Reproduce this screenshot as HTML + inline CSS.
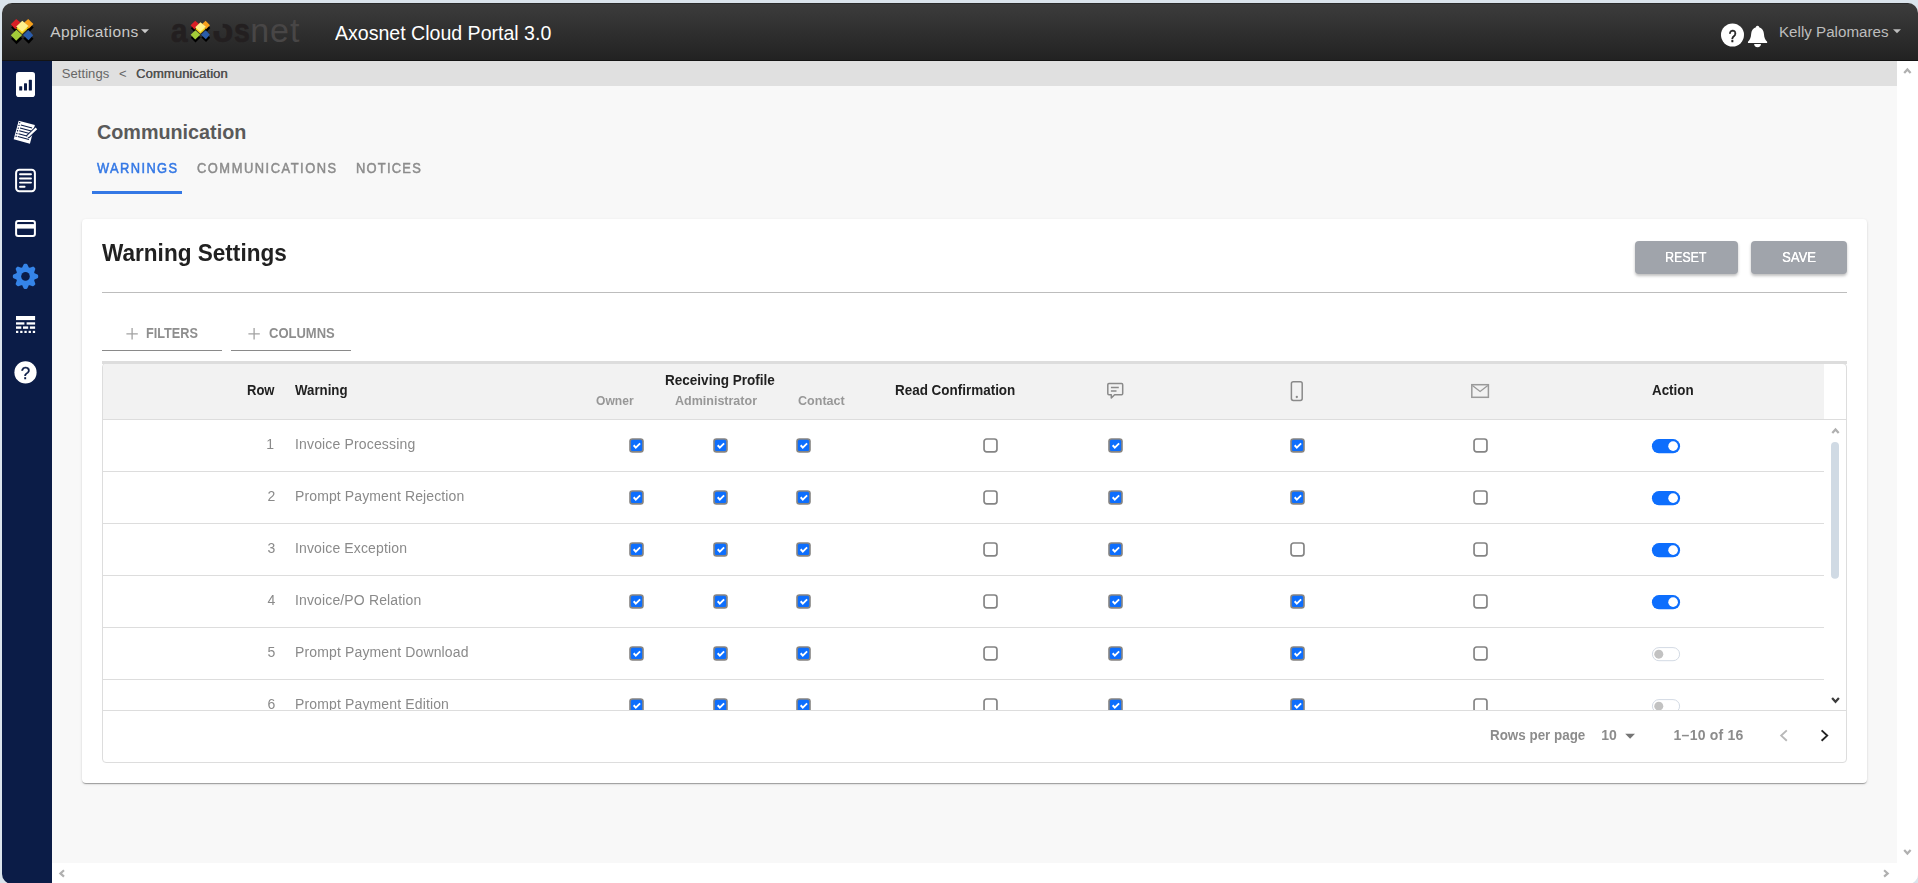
<!DOCTYPE html>
<html lang="en"><head><meta charset="utf-8"><title>Axosnet Cloud Portal 3.0</title>
<style>
html,body{margin:0;padding:0}
body{width:1918px;height:883px;overflow:hidden;background:#dbe4ec;font-family:"Liberation Sans",sans-serif;position:relative}
.t{position:absolute;white-space:nowrap;display:block}
.abs{position:absolute}
#win{position:absolute;left:2px;top:3px;width:1916px;height:881px;border-radius:10px;overflow:hidden;background:#f8f8f8}
#nav{position:absolute;left:0;top:0;width:1916px;height:58px;box-sizing:border-box;border-top:1px solid #2c2c2c;border-bottom:1px solid #141414;background:linear-gradient(#3c3c3c,#222)}
#side{position:absolute;left:0;top:58px;width:50px;height:824px;background:#0b1c47}
#crumb{position:absolute;left:50px;top:58px;width:1845px;height:25px;background:#e0e0e0}
#vs{position:absolute;left:1895px;top:58px;width:21px;height:802px;background:#fff}
#hs{position:absolute;left:50px;top:860px;width:1866px;height:22px;background:#fff}
#card{position:absolute;left:80px;top:216px;width:1785px;height:564px;background:#fff;border-radius:4px;box-shadow:0 2px 1px -1px rgba(0,0,0,.2),0 1px 1px 0 rgba(0,0,0,.14),0 1px 3px 0 rgba(0,0,0,.12)}
.btn{position:absolute;top:238px;height:33px;background:#a0a4ab;border-radius:4px;box-shadow:0 2px 3px rgba(0,0,0,.25)}
.hr{position:absolute;height:1px;background:#bdbdbd}
#tbl{position:absolute;left:100px;top:360px;width:1743px;height:398px;border:1px solid #ddd;border-radius:4px;overflow:hidden}
#tbar{position:absolute;left:100px;top:358px;width:1745px;height:3px;background:#ddd}
#thead{position:absolute;left:0;top:0;width:1721px;height:55px;background:#f2f2f2}
.rl{position:absolute;left:0;width:1721px;height:1px;background:#ddd}
</style></head><body>
<div id="win">
<div id="nav"></div><div id="side"></div><div id="crumb"></div><div id="vs"></div><div id="hs"></div><div id="card"></div>
<div class="btn" style="left:1633px;width:103px"></div><div class="btn" style="left:1749px;width:96px"></div>
<div class="hr" style="left:100px;top:289px;width:1745px"></div>
<div class="hr" style="left:100px;top:347px;width:120px;background:#8a8a8a"></div>
<div class="hr" style="left:229px;top:347px;width:120px;background:#8a8a8a"></div>
<div class="abs" style="left:90px;top:188px;width:90px;height:3px;background:#3478e5"></div>
<div id="tbar"></div><div id="tbl"><div id="thead"></div>
<div class="rl" style="top:55px;width:1746px"></div>
<div class="rl" style="top:107px"></div>
<div class="rl" style="top:159px"></div>
<div class="rl" style="top:211px"></div>
<div class="rl" style="top:263px"></div>
<div class="rl" style="top:315px"></div>
<div class="rl" style="top:346px;width:1746px"></div>
</div>
<svg class="abs" style="left:-2px;top:-3px" width="1918" height="710" viewBox="0 0 1918 710">
<g transform="translate(629.2,438.15)"><rect x="0" y="0" width="14.6" height="14.6" rx="3.3" fill="#868482"/><rect x="1.65" y="1.65" width="11.3" height="11.3" rx="1.7" fill="#0d6efd"/><path d="M4.5 7.1L6.6 9.5L10.9 5.2" fill="none" stroke="#fff" stroke-width="1.9"/></g>
<g transform="translate(713.2,438.15)"><rect x="0" y="0" width="14.6" height="14.6" rx="3.3" fill="#868482"/><rect x="1.65" y="1.65" width="11.3" height="11.3" rx="1.7" fill="#0d6efd"/><path d="M4.5 7.1L6.6 9.5L10.9 5.2" fill="none" stroke="#fff" stroke-width="1.9"/></g>
<g transform="translate(796.2,438.15)"><rect x="0" y="0" width="14.6" height="14.6" rx="3.3" fill="#868482"/><rect x="1.65" y="1.65" width="11.3" height="11.3" rx="1.7" fill="#0d6efd"/><path d="M4.5 7.1L6.6 9.5L10.9 5.2" fill="none" stroke="#fff" stroke-width="1.9"/></g>
<g transform="translate(983.2,438.15)"><rect x=".85" y=".85" width="12.9" height="12.9" rx="2.6" fill="#fff" stroke="#848484" stroke-width="1.7"/></g>
<g transform="translate(1108.2,438.15)"><rect x="0" y="0" width="14.6" height="14.6" rx="3.3" fill="#868482"/><rect x="1.65" y="1.65" width="11.3" height="11.3" rx="1.7" fill="#0d6efd"/><path d="M4.5 7.1L6.6 9.5L10.9 5.2" fill="none" stroke="#fff" stroke-width="1.9"/></g>
<g transform="translate(1290.2,438.15)"><rect x="0" y="0" width="14.6" height="14.6" rx="3.3" fill="#868482"/><rect x="1.65" y="1.65" width="11.3" height="11.3" rx="1.7" fill="#0d6efd"/><path d="M4.5 7.1L6.6 9.5L10.9 5.2" fill="none" stroke="#fff" stroke-width="1.9"/></g>
<g transform="translate(1473.2,438.15)"><rect x=".85" y=".85" width="12.9" height="12.9" rx="2.6" fill="#fff" stroke="#848484" stroke-width="1.7"/></g>
<g transform="translate(1651.9,439.1)"><rect x="0" y="0" width="28.2" height="14.1" rx="7.05" fill="#0d6efd"/><circle cx="21.2" cy="7.05" r="4.8" fill="#fff"/></g>
<g transform="translate(629.2,490.15)"><rect x="0" y="0" width="14.6" height="14.6" rx="3.3" fill="#868482"/><rect x="1.65" y="1.65" width="11.3" height="11.3" rx="1.7" fill="#0d6efd"/><path d="M4.5 7.1L6.6 9.5L10.9 5.2" fill="none" stroke="#fff" stroke-width="1.9"/></g>
<g transform="translate(713.2,490.15)"><rect x="0" y="0" width="14.6" height="14.6" rx="3.3" fill="#868482"/><rect x="1.65" y="1.65" width="11.3" height="11.3" rx="1.7" fill="#0d6efd"/><path d="M4.5 7.1L6.6 9.5L10.9 5.2" fill="none" stroke="#fff" stroke-width="1.9"/></g>
<g transform="translate(796.2,490.15)"><rect x="0" y="0" width="14.6" height="14.6" rx="3.3" fill="#868482"/><rect x="1.65" y="1.65" width="11.3" height="11.3" rx="1.7" fill="#0d6efd"/><path d="M4.5 7.1L6.6 9.5L10.9 5.2" fill="none" stroke="#fff" stroke-width="1.9"/></g>
<g transform="translate(983.2,490.15)"><rect x=".85" y=".85" width="12.9" height="12.9" rx="2.6" fill="#fff" stroke="#848484" stroke-width="1.7"/></g>
<g transform="translate(1108.2,490.15)"><rect x="0" y="0" width="14.6" height="14.6" rx="3.3" fill="#868482"/><rect x="1.65" y="1.65" width="11.3" height="11.3" rx="1.7" fill="#0d6efd"/><path d="M4.5 7.1L6.6 9.5L10.9 5.2" fill="none" stroke="#fff" stroke-width="1.9"/></g>
<g transform="translate(1290.2,490.15)"><rect x="0" y="0" width="14.6" height="14.6" rx="3.3" fill="#868482"/><rect x="1.65" y="1.65" width="11.3" height="11.3" rx="1.7" fill="#0d6efd"/><path d="M4.5 7.1L6.6 9.5L10.9 5.2" fill="none" stroke="#fff" stroke-width="1.9"/></g>
<g transform="translate(1473.2,490.15)"><rect x=".85" y=".85" width="12.9" height="12.9" rx="2.6" fill="#fff" stroke="#848484" stroke-width="1.7"/></g>
<g transform="translate(1651.9,491.1)"><rect x="0" y="0" width="28.2" height="14.1" rx="7.05" fill="#0d6efd"/><circle cx="21.2" cy="7.05" r="4.8" fill="#fff"/></g>
<g transform="translate(629.2,542.15)"><rect x="0" y="0" width="14.6" height="14.6" rx="3.3" fill="#868482"/><rect x="1.65" y="1.65" width="11.3" height="11.3" rx="1.7" fill="#0d6efd"/><path d="M4.5 7.1L6.6 9.5L10.9 5.2" fill="none" stroke="#fff" stroke-width="1.9"/></g>
<g transform="translate(713.2,542.15)"><rect x="0" y="0" width="14.6" height="14.6" rx="3.3" fill="#868482"/><rect x="1.65" y="1.65" width="11.3" height="11.3" rx="1.7" fill="#0d6efd"/><path d="M4.5 7.1L6.6 9.5L10.9 5.2" fill="none" stroke="#fff" stroke-width="1.9"/></g>
<g transform="translate(796.2,542.15)"><rect x="0" y="0" width="14.6" height="14.6" rx="3.3" fill="#868482"/><rect x="1.65" y="1.65" width="11.3" height="11.3" rx="1.7" fill="#0d6efd"/><path d="M4.5 7.1L6.6 9.5L10.9 5.2" fill="none" stroke="#fff" stroke-width="1.9"/></g>
<g transform="translate(983.2,542.15)"><rect x=".85" y=".85" width="12.9" height="12.9" rx="2.6" fill="#fff" stroke="#848484" stroke-width="1.7"/></g>
<g transform="translate(1108.2,542.15)"><rect x="0" y="0" width="14.6" height="14.6" rx="3.3" fill="#868482"/><rect x="1.65" y="1.65" width="11.3" height="11.3" rx="1.7" fill="#0d6efd"/><path d="M4.5 7.1L6.6 9.5L10.9 5.2" fill="none" stroke="#fff" stroke-width="1.9"/></g>
<g transform="translate(1290.2,542.15)"><rect x=".85" y=".85" width="12.9" height="12.9" rx="2.6" fill="#fff" stroke="#848484" stroke-width="1.7"/></g>
<g transform="translate(1473.2,542.15)"><rect x=".85" y=".85" width="12.9" height="12.9" rx="2.6" fill="#fff" stroke="#848484" stroke-width="1.7"/></g>
<g transform="translate(1651.9,543.1)"><rect x="0" y="0" width="28.2" height="14.1" rx="7.05" fill="#0d6efd"/><circle cx="21.2" cy="7.05" r="4.8" fill="#fff"/></g>
<g transform="translate(629.2,594.15)"><rect x="0" y="0" width="14.6" height="14.6" rx="3.3" fill="#868482"/><rect x="1.65" y="1.65" width="11.3" height="11.3" rx="1.7" fill="#0d6efd"/><path d="M4.5 7.1L6.6 9.5L10.9 5.2" fill="none" stroke="#fff" stroke-width="1.9"/></g>
<g transform="translate(713.2,594.15)"><rect x="0" y="0" width="14.6" height="14.6" rx="3.3" fill="#868482"/><rect x="1.65" y="1.65" width="11.3" height="11.3" rx="1.7" fill="#0d6efd"/><path d="M4.5 7.1L6.6 9.5L10.9 5.2" fill="none" stroke="#fff" stroke-width="1.9"/></g>
<g transform="translate(796.2,594.15)"><rect x="0" y="0" width="14.6" height="14.6" rx="3.3" fill="#868482"/><rect x="1.65" y="1.65" width="11.3" height="11.3" rx="1.7" fill="#0d6efd"/><path d="M4.5 7.1L6.6 9.5L10.9 5.2" fill="none" stroke="#fff" stroke-width="1.9"/></g>
<g transform="translate(983.2,594.15)"><rect x=".85" y=".85" width="12.9" height="12.9" rx="2.6" fill="#fff" stroke="#848484" stroke-width="1.7"/></g>
<g transform="translate(1108.2,594.15)"><rect x="0" y="0" width="14.6" height="14.6" rx="3.3" fill="#868482"/><rect x="1.65" y="1.65" width="11.3" height="11.3" rx="1.7" fill="#0d6efd"/><path d="M4.5 7.1L6.6 9.5L10.9 5.2" fill="none" stroke="#fff" stroke-width="1.9"/></g>
<g transform="translate(1290.2,594.15)"><rect x="0" y="0" width="14.6" height="14.6" rx="3.3" fill="#868482"/><rect x="1.65" y="1.65" width="11.3" height="11.3" rx="1.7" fill="#0d6efd"/><path d="M4.5 7.1L6.6 9.5L10.9 5.2" fill="none" stroke="#fff" stroke-width="1.9"/></g>
<g transform="translate(1473.2,594.15)"><rect x=".85" y=".85" width="12.9" height="12.9" rx="2.6" fill="#fff" stroke="#848484" stroke-width="1.7"/></g>
<g transform="translate(1651.9,595.1)"><rect x="0" y="0" width="28.2" height="14.1" rx="7.05" fill="#0d6efd"/><circle cx="21.2" cy="7.05" r="4.8" fill="#fff"/></g>
<g transform="translate(629.2,646.15)"><rect x="0" y="0" width="14.6" height="14.6" rx="3.3" fill="#868482"/><rect x="1.65" y="1.65" width="11.3" height="11.3" rx="1.7" fill="#0d6efd"/><path d="M4.5 7.1L6.6 9.5L10.9 5.2" fill="none" stroke="#fff" stroke-width="1.9"/></g>
<g transform="translate(713.2,646.15)"><rect x="0" y="0" width="14.6" height="14.6" rx="3.3" fill="#868482"/><rect x="1.65" y="1.65" width="11.3" height="11.3" rx="1.7" fill="#0d6efd"/><path d="M4.5 7.1L6.6 9.5L10.9 5.2" fill="none" stroke="#fff" stroke-width="1.9"/></g>
<g transform="translate(796.2,646.15)"><rect x="0" y="0" width="14.6" height="14.6" rx="3.3" fill="#868482"/><rect x="1.65" y="1.65" width="11.3" height="11.3" rx="1.7" fill="#0d6efd"/><path d="M4.5 7.1L6.6 9.5L10.9 5.2" fill="none" stroke="#fff" stroke-width="1.9"/></g>
<g transform="translate(983.2,646.15)"><rect x=".85" y=".85" width="12.9" height="12.9" rx="2.6" fill="#fff" stroke="#848484" stroke-width="1.7"/></g>
<g transform="translate(1108.2,646.15)"><rect x="0" y="0" width="14.6" height="14.6" rx="3.3" fill="#868482"/><rect x="1.65" y="1.65" width="11.3" height="11.3" rx="1.7" fill="#0d6efd"/><path d="M4.5 7.1L6.6 9.5L10.9 5.2" fill="none" stroke="#fff" stroke-width="1.9"/></g>
<g transform="translate(1290.2,646.15)"><rect x="0" y="0" width="14.6" height="14.6" rx="3.3" fill="#868482"/><rect x="1.65" y="1.65" width="11.3" height="11.3" rx="1.7" fill="#0d6efd"/><path d="M4.5 7.1L6.6 9.5L10.9 5.2" fill="none" stroke="#fff" stroke-width="1.9"/></g>
<g transform="translate(1473.2,646.15)"><rect x=".85" y=".85" width="12.9" height="12.9" rx="2.6" fill="#fff" stroke="#848484" stroke-width="1.7"/></g>
<g transform="translate(1651.9,647.1)"><rect x=".5" y=".5" width="27.2" height="13.1" rx="6.55" fill="#fff" stroke="#d3dae4" stroke-width="1"/><circle cx="6.9" cy="7.05" r="4.5" fill="#c2c2c2"/></g>
<g transform="translate(629.2,698.15)"><rect x="0" y="0" width="14.6" height="14.6" rx="3.3" fill="#868482"/><rect x="1.65" y="1.65" width="11.3" height="11.3" rx="1.7" fill="#0d6efd"/><path d="M4.5 7.1L6.6 9.5L10.9 5.2" fill="none" stroke="#fff" stroke-width="1.9"/></g>
<g transform="translate(713.2,698.15)"><rect x="0" y="0" width="14.6" height="14.6" rx="3.3" fill="#868482"/><rect x="1.65" y="1.65" width="11.3" height="11.3" rx="1.7" fill="#0d6efd"/><path d="M4.5 7.1L6.6 9.5L10.9 5.2" fill="none" stroke="#fff" stroke-width="1.9"/></g>
<g transform="translate(796.2,698.15)"><rect x="0" y="0" width="14.6" height="14.6" rx="3.3" fill="#868482"/><rect x="1.65" y="1.65" width="11.3" height="11.3" rx="1.7" fill="#0d6efd"/><path d="M4.5 7.1L6.6 9.5L10.9 5.2" fill="none" stroke="#fff" stroke-width="1.9"/></g>
<g transform="translate(983.2,698.15)"><rect x=".85" y=".85" width="12.9" height="12.9" rx="2.6" fill="#fff" stroke="#848484" stroke-width="1.7"/></g>
<g transform="translate(1108.2,698.15)"><rect x="0" y="0" width="14.6" height="14.6" rx="3.3" fill="#868482"/><rect x="1.65" y="1.65" width="11.3" height="11.3" rx="1.7" fill="#0d6efd"/><path d="M4.5 7.1L6.6 9.5L10.9 5.2" fill="none" stroke="#fff" stroke-width="1.9"/></g>
<g transform="translate(1290.2,698.15)"><rect x="0" y="0" width="14.6" height="14.6" rx="3.3" fill="#868482"/><rect x="1.65" y="1.65" width="11.3" height="11.3" rx="1.7" fill="#0d6efd"/><path d="M4.5 7.1L6.6 9.5L10.9 5.2" fill="none" stroke="#fff" stroke-width="1.9"/></g>
<g transform="translate(1473.2,698.15)"><rect x=".85" y=".85" width="12.9" height="12.9" rx="2.6" fill="#fff" stroke="#848484" stroke-width="1.7"/></g>
<g transform="translate(1651.9,699.1)"><rect x=".5" y=".5" width="27.2" height="13.1" rx="6.55" fill="#fff" stroke="#d3dae4" stroke-width="1"/><circle cx="6.9" cy="7.05" r="4.5" fill="#c2c2c2"/></g>
</svg>
<span class="t" id="t_app" style="left:48.2px;top:20.9px;font-size:15.5px;line-height:15.5px;color:#c9c9c9;letter-spacing:0.402px;">Applications</span>
<span class="t" id="t_lga" style="left:168.6px;top:10.2px;font-size:34px;line-height:34px;color:#231f20;font-weight:700;transform:scaleX(0.8746);transform-origin:0 0;-webkit-text-stroke:.7px #231f20;">a</span>
<span class="t" id="t_lgo" style="left:210.4px;top:10.2px;font-size:34px;line-height:34px;color:#231f20;font-weight:700;transform:scaleX(1.0);transform-origin:0 0;-webkit-text-stroke:.7px #231f20;clip-path:polygon(10.3px 0,100% 0,100% 100%,0 100%,0 17.9px,10.3px 17.9px);">o</span>
<span class="t" id="t_lgs" style="left:231.6px;top:10.2px;font-size:34px;line-height:34px;color:#231f20;font-weight:700;transform:scaleX(0.84);transform-origin:0 0;-webkit-text-stroke:.7px #231f20;">s</span>
<span class="t" id="t_lgnet" style="left:248.2px;top:10.2px;font-size:34px;line-height:34px;color:#484646;letter-spacing:1.017px;">net</span>
<span class="t" id="t_title" style="left:332.5px;top:20.1px;font-size:20px;line-height:20px;color:#fff;transform:scaleX(0.9776);transform-origin:0 0;">Axosnet Cloud Portal 3.0</span>
<span class="t" id="t_user" style="left:1777.4px;top:20.9px;font-size:15.5px;line-height:15.5px;color:#bdbdbd;transform:scaleX(0.9777);transform-origin:0 0;">Kelly Palomares</span>
<span class="t" id="t_bc1" style="left:59.8px;top:64.0px;font-size:13px;line-height:13px;color:#666;letter-spacing:0.059px;">Settings</span>
<span class="t" id="t_bc2" style="left:117.0px;top:64.0px;font-size:13px;line-height:13px;color:#666;">&lt;</span>
<span class="t" id="t_bc3" style="left:134.0px;top:64.0px;font-size:13px;line-height:13px;color:#505050;letter-spacing:0.106px;text-shadow:0.35px 0 0 #505050;">Communication</span>
<span class="t" id="t_h1" style="left:94.6px;top:119.1px;font-size:20px;line-height:20px;color:#5a5a5a;font-weight:700;transform:scaleX(0.9879);transform-origin:0 0;">Communication</span>
<div class="abs" style="left:0;top:0;width:1915px;height:881px;will-change:transform">
<span class="t" id="t_tab1" style="left:95.0px;top:158.1px;font-size:14px;line-height:14px;color:#3478e5;transform:scaleX(0.92);transform-origin:0 0;letter-spacing:1.512px;-webkit-text-stroke:.5px #3478e5;">WARNINGS</span>
<span class="t" id="t_tab2" style="left:195.2px;top:158.1px;font-size:14px;line-height:14px;color:#8c8c8c;transform:scaleX(0.92);transform-origin:0 0;letter-spacing:1.659px;-webkit-text-stroke:.5px #8c8c8c;">COMMUNICATIONS</span>
<span class="t" id="t_tab3" style="left:354.2px;top:158.1px;font-size:14px;line-height:14px;color:#8c8c8c;transform:scaleX(0.92);transform-origin:0 0;letter-spacing:1.367px;-webkit-text-stroke:.5px #8c8c8c;">NOTICES</span>
<span class="t" id="t_ws" style="left:100.2px;top:237.7px;font-size:24px;line-height:24px;color:#212121;font-weight:700;transform:scaleX(0.9407);transform-origin:0 0;">Warning Settings</span>
<span class="t" id="t_reset" style="left:1663.2px;top:247.1px;font-size:14px;line-height:14px;color:#fff;transform:scaleX(0.8846);transform-origin:0 0;text-shadow:0.3px 0 0 #fff;">RESET</span>
<span class="t" id="t_save" style="left:1780.4px;top:247.1px;font-size:14px;line-height:14px;color:#fff;transform:scaleX(0.9308);transform-origin:0 0;text-shadow:0.3px 0 0 #fff;">SAVE</span>
<span class="t" id="t_fil" style="left:144.4px;top:323.1px;font-size:14px;line-height:14px;color:#8e8e8e;font-weight:700;transform:scaleX(0.9076);transform-origin:0 0;">FILTERS</span>
<span class="t" id="t_col" style="left:266.7px;top:323.1px;font-size:14px;line-height:14px;color:#8e8e8e;font-weight:700;transform:scaleX(0.9296);transform-origin:0 0;">COLUMNS</span>
<span class="t" id="t_row" style="left:245.2px;top:380.1px;font-size:14px;line-height:14px;color:#212121;font-weight:700;transform:scaleX(0.9302);transform-origin:0 0;">Row</span>
<span class="t" id="t_warn" style="left:293.0px;top:380.1px;font-size:14px;line-height:14px;color:#212121;font-weight:700;transform:scaleX(0.9462);transform-origin:0 0;">Warning</span>
<span class="t" id="t_rp" style="left:663.4px;top:370.1px;font-size:14px;line-height:14px;color:#212121;font-weight:700;transform:scaleX(0.9666);transform-origin:0 0;">Receiving Profile</span>
<span class="t" id="t_own" style="left:593.7px;top:391.0px;font-size:13px;line-height:13px;color:#979797;font-weight:700;transform:scaleX(0.9291);transform-origin:0 0;">Owner</span>
<span class="t" id="t_adm" style="left:673.0px;top:391.0px;font-size:13px;line-height:13px;color:#979797;font-weight:700;transform:scaleX(0.9621);transform-origin:0 0;">Administrator</span>
<span class="t" id="t_con" style="left:796.3px;top:391.0px;font-size:13px;line-height:13px;color:#979797;font-weight:700;transform:scaleX(0.9651);transform-origin:0 0;">Contact</span>
<span class="t" id="t_rc" style="left:893.0px;top:380.1px;font-size:14px;line-height:14px;color:#212121;font-weight:700;transform:scaleX(0.9606);transform-origin:0 0;">Read Confirmation</span>
<span class="t" id="t_act" style="left:1650.0px;top:380.1px;font-size:14px;line-height:14px;color:#212121;font-weight:700;transform:scaleX(0.9549);transform-origin:0 0;">Action</span>
<span class="t" id="t_rpp" style="left:1488.1px;top:725.1px;font-size:14px;line-height:14px;color:#8c8c8c;font-weight:700;transform:scaleX(0.9569);transform-origin:0 0;">Rows per page</span>
<span class="t" id="t_10" style="left:1599.2px;top:725.1px;font-size:14px;line-height:14px;color:#8c8c8c;font-weight:700;letter-spacing:0.022px;">10</span>
<span class="t" id="t_rng" style="left:1671.6px;top:725.1px;font-size:14px;line-height:14px;color:#8c8c8c;font-weight:700;letter-spacing:0.231px;">1–10 of 16</span>
</div>
<div class="abs" style="left:0;top:0;width:1916px;height:707px;overflow:hidden;will-change:transform">
<span class="t" id="t_r0" style="left:293.0px;top:434.1px;font-size:14px;line-height:14px;color:#8a8a8a;letter-spacing:0.158px;">Invoice Processing</span>
<span class="t" id="t_n0" style="left:264.3px;top:434.1px;font-size:14px;line-height:14px;color:#8a8a8a;">1</span>
<span class="t" id="t_r1" style="left:293.0px;top:486.1px;font-size:14px;line-height:14px;color:#8a8a8a;letter-spacing:0.120px;">Prompt Payment Rejection</span>
<span class="t" id="t_n1" style="left:265.6px;top:486.1px;font-size:14px;line-height:14px;color:#8a8a8a;">2</span>
<span class="t" id="t_r2" style="left:293.0px;top:538.1px;font-size:14px;line-height:14px;color:#8a8a8a;letter-spacing:0.139px;">Invoice Exception</span>
<span class="t" id="t_n2" style="left:265.6px;top:538.1px;font-size:14px;line-height:14px;color:#8a8a8a;">3</span>
<span class="t" id="t_r3" style="left:293.0px;top:590.1px;font-size:14px;line-height:14px;color:#8a8a8a;letter-spacing:0.139px;">Invoice/PO Relation</span>
<span class="t" id="t_n3" style="left:265.6px;top:590.1px;font-size:14px;line-height:14px;color:#8a8a8a;">4</span>
<span class="t" id="t_r4" style="left:293.0px;top:642.1px;font-size:14px;line-height:14px;color:#8a8a8a;letter-spacing:0.139px;">Prompt Payment Download</span>
<span class="t" id="t_n4" style="left:265.6px;top:642.1px;font-size:14px;line-height:14px;color:#8a8a8a;">5</span>
<span class="t" id="t_r5" style="left:293.0px;top:694.1px;font-size:14px;line-height:14px;color:#8a8a8a;letter-spacing:0.139px;">Prompt Payment Edition</span>
<span class="t" id="t_n5" style="left:265.6px;top:694.1px;font-size:14px;line-height:14px;color:#8a8a8a;">6</span>
</div>
<svg class="abs" style="left:-2px;top:-3px;overflow:visible" width="1918" height="883" viewBox="0 0 1918 883">
<g><polygon points="11.1,27.6 16.5,22.4 20.9,26.0 15.6,32.6" fill="#000" /><polygon points="24.5,26.0 28.5,22.4 33.7,27.4 29.0,32.2" fill="#000" /><polygon points="11.1,38.7 16.7,33.2 22.4,38.5 16.5,44.2" fill="#000" /><polygon points="23.3,38.5 28.8,33.4 33.5,38.7 28.8,43.7" fill="#000" /><polygon points="10.8,24.2 16.2,19.0 20.6,22.6 15.3,29.2" fill="#d81f26" /><polygon points="24.2,22.6 28.2,19.0 33.4,24.0 28.7,28.8" fill="#f6a01c" /><polygon points="10.8,35.3 16.4,29.8 22.1,35.1 16.2,40.8" fill="#a3cd39" /><polygon points="23.0,35.1 28.5,30.0 33.2,35.3 28.5,40.3" fill="#2a5caa" /><polygon points="16.2,28.6 22.3,22.9 28.5,28.1 22.1,34.0" fill="#f7d417" /><polygon points="16.2,26.4 22.3,20.7 28.5,25.9 22.1,31.8" fill="#fdf08c" /></g>
<g transform="translate(181.3,4.5) scale(0.86)"><polygon points="11.1,27.6 16.5,22.4 20.9,26.0 15.6,32.6" fill="#000" /><polygon points="24.5,26.0 28.5,22.4 33.7,27.4 29.0,32.2" fill="#000" /><polygon points="11.1,38.7 16.7,33.2 22.4,38.5 16.5,44.2" fill="#000" /><polygon points="23.3,38.5 28.8,33.4 33.5,38.7 28.8,43.7" fill="#000" /><polygon points="10.8,24.2 16.2,19.0 20.6,22.6 15.3,29.2" fill="#d81f26" /><polygon points="24.2,22.6 28.2,19.0 33.4,24.0 28.7,28.8" fill="#f6a01c" /><polygon points="10.8,35.3 16.4,29.8 22.1,35.1 16.2,40.8" fill="#a3cd39" /><polygon points="23.0,35.1 28.5,30.0 33.2,35.3 28.5,40.3" fill="#2a5caa" /><polygon points="16.2,28.6 22.3,22.9 28.5,28.1 22.1,34.0" fill="#f7d417" /><polygon points="16.2,26.4 22.3,20.7 28.5,25.9 22.1,31.8" fill="#fdf08c" /></g>
<polygon points="141,29.3 149,29.3 145,33.3" fill="#c9c9c9"/>
<polygon points="1893,29.3 1901,29.3 1897,33.3" fill="#bdbdbd"/>
<circle cx="1732.5" cy="35" r="11.5" fill="#fff"/>
<text transform="translate(1732.6,41.6) scale(.82,1)" x="0" y="0" font-family="Liberation Sans, sans-serif" font-size="17" text-anchor="middle" fill="#222" stroke="#222" stroke-width=".6">?</text>
<path d="M1757.55 25.7C1758.75 25.7 1759.15 26.6 1759.15 27.3C1762.15 28.2 1763.75 30.8 1763.95 34C1764.15 37.5 1765.15 39.8 1767.15 41.8L1767.15 43.1L1747.95 43.1L1747.95 41.8C1749.95 39.8 1750.95 37.5 1751.15 34C1751.35 30.8 1752.95 28.2 1755.95 27.3C1755.95 26.6 1756.35 25.7 1757.55 25.7Z" fill="#fff"/>
<path d="M1754.15 44.1A3.4 3.1 0 0 0 1760.95 44.1Z" fill="#fff"/>
<rect x="16" y="72" width="19" height="25" rx="2.8" fill="#fff"/>
<rect x="19.2" y="86.2" width="3" height="4.4" rx=".6" fill="#0b1c47"/><rect x="24" y="83.2" width="3" height="7.4" rx=".6" fill="#0b1c47"/><rect x="28.8" y="79.8" width="3.1" height="10.8" rx=".6" fill="#0b1c47"/>
<g transform="translate(24.3,132.2) rotate(15)"><rect x="-8.4" y="-9.6" width="16.8" height="19.2" fill="#fff"/><rect x="-5.2" y="-6.6" width="11.6" height="1.1" fill="#0b1c47"/><rect x="-5.2" y="-3.6" width="11.6" height="1.1" fill="#0b1c47"/><rect x="-5.2" y="-0.6" width="11.6" height="1.1" fill="#0b1c47"/><rect x="-5.2" y="2.4" width="11.6" height="1.1" fill="#0b1c47"/><rect x="-5.2" y="5.2" width="11.6" height="1.1" fill="#0b1c47"/><circle cx="-6.9" cy="-8" r=".7" fill="#0b1c47"/><circle cx="-6.9" cy="-5.2" r=".7" fill="#0b1c47"/><circle cx="-6.9" cy="-2.4" r=".7" fill="#0b1c47"/><circle cx="-6.9" cy="0.4" r=".7" fill="#0b1c47"/><circle cx="-6.9" cy="3.2" r=".7" fill="#0b1c47"/><circle cx="-6.9" cy="6" r=".7" fill="#0b1c47"/></g>
<path d="M36.6 128.2 L27.4 137" stroke="#0b1c47" stroke-width="4.2" stroke-linecap="butt" fill="none"/>
<path d="M36.4 128.4 L28.2 136.2" stroke="#fff" stroke-width="2.2" fill="none"/>
<path d="M27.8 135.3 L29.2 136.8 L26.6 137.8Z" fill="#fff"/>
<rect x="16.1" y="169.8" width="18.8" height="21.4" rx="3.2" fill="none" stroke="#fff" stroke-width="2"/>
<path d="M20 174.3H31M20 178.5H31M20 182.6H31M20 186.7H24.6" stroke="#fff" stroke-width="1.9" stroke-linecap="round" fill="none"/>
<rect x="16.1" y="221" width="18.8" height="15" rx="2" fill="none" stroke="#fff" stroke-width="2"/>
<rect x="16" y="224.1" width="19" height="4.5" fill="#fff"/>
<polygon points="24.80,265.02 26.20,265.02 27.79,268.42 29.52,269.14 33.05,267.86 34.04,268.85 32.76,272.38 33.48,274.11 36.88,275.70 36.88,277.10 33.48,278.69 32.76,280.42 34.04,283.95 33.05,284.94 29.52,283.66 27.79,284.38 26.20,287.78 24.80,287.78 23.21,284.38 21.48,283.66 17.95,284.94 16.96,283.95 18.24,280.42 17.52,278.69 14.12,277.10 14.12,275.70 17.52,274.11 18.24,272.38 16.96,268.85 17.95,267.86 21.48,269.14 23.21,268.42" fill="#3584e8" stroke="#3584e8" stroke-width="2.6" stroke-linejoin="round"/>
<circle cx="25.5" cy="276.4" r="4.3" fill="#0b1c47"/>
<g fill="#fff"><rect x="16" y="316" width="19.1" height="4.1"/><rect x="16" y="322.3" width="8.4" height="2.3"/><rect x="26.6" y="322.3" width="8.5" height="2.3"/><rect x="16" y="326.4" width="5.3" height="2.4"/><rect x="23" y="326.4" width="5.2" height="2.4"/><rect x="29.9" y="326.4" width="5.2" height="2.4"/><rect x="16" y="330.8" width="2.3" height="2.2"/><rect x="20.2" y="330.8" width="2.3" height="2.2"/><rect x="24.4" y="330.8" width="2.3" height="2.2"/><rect x="28.6" y="330.8" width="2.3" height="2.2"/><rect x="32.8" y="330.8" width="2.3" height="2.2"/></g>
<circle cx="25.5" cy="372.4" r="11.1" fill="#fff"/>
<text x="25.5" y="378.9" font-family="Liberation Sans, sans-serif" font-size="17" text-anchor="middle" fill="#0b1c47" stroke="#0b1c47" stroke-width=".3">?</text>
<path d="M126.4 333.8H137.8M132.1 328.1V339.5M248.4 333.8H259.8M254.1 328.1V339.5" stroke="#a2a2a2" stroke-width="1.3" fill="none"/>
<path d="M1108.9 383.6H1121.6Q1122.7 383.6 1122.7 384.7V393.6Q1122.7 394.7 1121.6 394.7H1114.6L1111.3 398V394.7H1108.9Q1107.8 394.7 1107.8 393.6V384.7Q1107.8 383.6 1108.9 383.6Z" fill="none" stroke="#8a8a8a" stroke-width="1.5" stroke-linejoin="round"/>
<path d="M1110.9 387.5H1118.8M1110.9 390.9H1116.5" stroke="#8a8a8a" stroke-width="1.5" fill="none"/>
<rect x="1291.4" y="381.7" width="10.8" height="18.7" rx="1.9" fill="none" stroke="#8a8a8a" stroke-width="1.5"/><circle cx="1296.8" cy="397" r="1.15" fill="#8a8a8a"/>
<rect x="1471.8" y="384.7" width="16.6" height="12.6" fill="none" stroke="#9a9a9a" stroke-width="1.5"/><path d="M1472.4 385.4L1480.1 391.4L1487.8 385.4" fill="none" stroke="#9a9a9a" stroke-width="1.3"/>
<path d="M1904.2 73.1L1907.4 69.5L1910.6000000000001 73.1" fill="none" stroke="#b0b0b0" stroke-width="2.2"/>
<path d="M1904.2 849.9000000000001L1907.4 853.5L1910.6000000000001 849.9000000000001" fill="none" stroke="#b0b0b0" stroke-width="2.2"/>
<path d="M64.0 870.1999999999999L60.400000000000006 873.4L64.0 876.6" fill="none" stroke="#b0b0b0" stroke-width="2.2"/>
<path d="M1884.1000000000001 870.1999999999999L1887.7 873.4L1884.1000000000001 876.6" fill="none" stroke="#b0b0b0" stroke-width="2.2"/>
<path d="M1832.3 433.0L1835.5 429.4L1838.7 433.0" fill="none" stroke="#b0b0b0" stroke-width="2.2"/>
<path d="M1832.1 698.0L1835.5 701.8L1838.9 698.0" fill="none" stroke="#3c3c3c" stroke-width="2.2"/>
<rect x="1831" y="442" width="8" height="136.8" rx="4" fill="#d0dae4"/>
<polygon points="1625.2,733.8 1635,733.8 1630.1,738.7" fill="#757575"/>
<path d="M1786.8 730.4L1781.2 735.6L1786.8 740.8000000000001" fill="none" stroke="#b8b8b8" stroke-width="1.9"/>
<path d="M1821.6000000000001 730.4L1827.2 735.6L1821.6000000000001 740.8000000000001" fill="none" stroke="#222" stroke-width="1.9"/>
</svg>
</div></body></html>
